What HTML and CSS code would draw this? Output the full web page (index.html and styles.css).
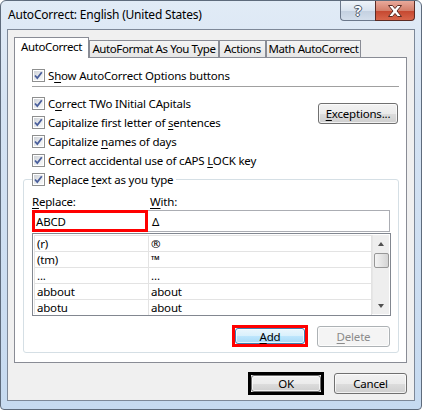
FILE: index.html
```html
<!DOCTYPE html>
<html lang="en">
<head>
    <meta charset="UTF-8">
    <title>AutoCorrect: English (United States)</title>
    <link rel="stylesheet" href="styles.css">
</head>
<body>
    <div class="window">
        <div class="titlebar">
            <span class="title">AutoCorrect: English (United States)</span>
            <div class="caption">
                <span class="cap help">?</span>
                <span class="cap close">
                    <svg width="16" height="14" viewBox="0 0 16 14"><path d="M1.5 1.5h4l2.5 3 2.5-3h4l-4.5 5.5 4.5 5.5h-4l-2.5-3-2.5 3h-4l4.5-5.5z" fill="#fff" stroke="#5a2a22" stroke-width="1" stroke-linejoin="round"/></svg>
                </span>
            </div>
        </div>

        <div class="client">
            <div class="tabs">
                <div class="tab active">AutoCorrect</div>
                <div class="tab t2">AutoFormat As You Type</div>
                <div class="tab t3">Actions</div>
                <div class="tab t4">Math AutoCorrect</div>
            </div>

            <div class="panel">
                <div class="row show">
                    <span class="cb"><svg width="11" height="11" viewBox="0 0 11 11"><path d="M2 5.5l2.3 2.6L8.8 2.2" fill="none" stroke="#4a5f9c" stroke-width="1.8"/></svg></span>
                    <span>S<u>h</u>ow AutoCorrect Options buttons</span>
                </div>
                <div class="sep"></div>

                <div class="opts">
                    <div class="opt-list">
                        <div class="row">
                            <span class="cb"><svg width="11" height="11" viewBox="0 0 11 11"><path d="M2 5.5l2.3 2.6L8.8 2.2" fill="none" stroke="#4a5f9c" stroke-width="1.8"/></svg></span>
                            <span>C<u>o</u>rrect TWo INitial CApitals</span>
                        </div>
                        <div class="row">
                            <span class="cb"><svg width="11" height="11" viewBox="0 0 11 11"><path d="M2 5.5l2.3 2.6L8.8 2.2" fill="none" stroke="#4a5f9c" stroke-width="1.8"/></svg></span>
                            <span>Capitalize first letter of <u>s</u>entences</span>
                        </div>
                        <div class="row">
                            <span class="cb"><svg width="11" height="11" viewBox="0 0 11 11"><path d="M2 5.5l2.3 2.6L8.8 2.2" fill="none" stroke="#4a5f9c" stroke-width="1.8"/></svg></span>
                            <span>Capitalize <u>n</u>ames of days</span>
                        </div>
                        <div class="row">
                            <span class="cb"><svg width="11" height="11" viewBox="0 0 11 11"><path d="M2 5.5l2.3 2.6L8.8 2.2" fill="none" stroke="#4a5f9c" stroke-width="1.8"/></svg></span>
                            <span>Correct accidental use of cAPS <u>L</u>OCK key</span>
                        </div>
                    </div>
                    <button class="btn exc"><u>E</u>xceptions...</button>
                </div>

                <fieldset class="group">
                    <legend>
                        <span class="row">
                            <span class="cb"><svg width="11" height="11" viewBox="0 0 11 11"><path d="M2 5.5l2.3 2.6L8.8 2.2" fill="none" stroke="#4a5f9c" stroke-width="1.8"/></svg></span>
                            <span>Replace <u>t</u>ext as you type</span>
                        </span>
                    </legend>

                    <div class="labels">
                        <span class="lbl-replace"><u>R</u>eplace:</span>
                        <span><u>W</u>ith:</span>
                    </div>
                    <div class="inputs">
                        <div class="field replace">ABCD</div>
                        <div class="field with">Δ</div>
                    </div>

                    <div class="list">
                        <div class="grid">
                            <div class="cell">(r)</div><div class="cell">®</div>
                            <div class="cell">(tm)</div><div class="cell">™</div>
                            <div class="cell">...</div><div class="cell">…</div>
                            <div class="cell">abbout</div><div class="cell">about</div>
                            <div class="cell">abotu</div><div class="cell">about</div>
                        </div>
                        <div class="scroll">
                            <span class="arrow"><span class="tri up"></span></span>
                            <span class="thumb"></span>
                            <span class="arrow bottom"><span class="tri down"></span></span>
                        </div>
                    </div>

                    <div class="actions">
                        <span class="mark red"><button class="btn add"><u>A</u>dd</button></span>
                        <button class="btn del"><u>D</u>elete</button>
                    </div>
                </fieldset>
            </div>

            <div class="footer">
                <span class="mark black"><button class="btn ok">OK</button></span>
                <button class="btn cancel">Cancel</button>
            </div>
        </div>
    </div>
</body>
</html>
```

FILE: styles.css
```css
* {
    margin: 0;
    padding: 0;
    box-sizing: border-box;
}

body {
    width: 422px;
    height: 410px;
    overflow: hidden;
    background: #fff;
    font-family: "Noto Sans", sans-serif;
    font-size: 11.5px;
    letter-spacing: -0.2px;
    color: #000;
}

u {
    text-underline-offset: 2px;
}

/* window frame */
.window {
    width: 422px;
    height: 410px;
    border: 1px solid #5e6b7c;
    border-radius: 6px 6px 4px 4px;
    background: linear-gradient(180deg, #e1ebf6 0%, #d5e3f3 25%, #c6daf0 100%);
    padding: 0 6px 8px;
    display: flex;
    flex-direction: column;
}

.titlebar {
    height: 28px;
    display: flex;
    align-items: flex-start;
    padding-left: 1px;
}

.title {
    line-height: 28px;
    font-size: 12px;
    letter-spacing: -0.2px;
}

.caption {
    margin-left: auto;
    display: flex;
}

.cap {
    height: 20px;
    display: flex;
    align-items: center;
    justify-content: center;
    border: 1px solid #6b788b;
    border-top: none;
}

.help {
    width: 35px;
    border-right: none;
    border-radius: 0 0 0 4px;
    background: linear-gradient(180deg, #eef3f9 0%, #d9e3ef 50%, #c3d0e0 51%, #d3deeb 100%);
    color: #fff;
    font-weight: bold;
    font-size: 14px;
    text-shadow: 1px 0 #4b586a, -1px 0 #4b586a, 0 1px #4b586a, 0 -1px #4b586a;
}

.close {
    width: 40px;
    border-color: #5b2b24;
    border-radius: 0 0 4px 0;
    background: linear-gradient(180deg, #e9a99b 0%, #d47f6b 50%, #c4462f 51%, #d8664b 100%);
}

/* client area */
.client {
    flex: 1;
    background: #f0f0f0;
    border: 1px solid #7d8898;
    padding: 7px 0 0 6px;
}

.tabs {
    display: flex;
    align-items: flex-end;
    height: 20px;
}

.tab {
    height: 17px;
    border: 1px solid #898c95;
    border-bottom: none;
    background: linear-gradient(180deg, #f4f4f4 0%, #e6e6e6 100%);
    text-align: center;
    line-height: 15px;
    white-space: nowrap;
    letter-spacing: -0.4px;
    overflow: hidden;
}

.tab.active {
    width: 75px;
    height: 21px;
    margin-bottom: -1px;
    background: #fff;
    line-height: 18px;
    position: relative;
    z-index: 1;
}

.t2 { width: 130px; }
.t3 { width: 47px; }
.t4 { width: 95px; }

.panel {
    width: 393px;
    height: 306px;
    background: #fff;
    border: 1px solid #898c95;
    padding: 8px 7px 0 8px;
}

.row {
    display: flex;
    align-items: center;
    height: 19px;
    gap: 3px;
    white-space: nowrap;
}

.cb {
    width: 13px;
    height: 13px;
    flex: none;
    display: flex;
    border: 1px solid #8e8f8f;
    background: linear-gradient(135deg, #c8ccd2 0%, #eceef0 60%, #fafafa 100%);
    box-shadow: inset 0 0 0 1px #fff;
}

.show {
    padding-left: 9px;
}

.sep {
    height: 1px;
    background: #a0a0a0;
    margin: 1px 0 7px 9px;
}

.opts {
    display: flex;
    padding-left: 9px;
}

.opt-list {
    flex: 1;
}

/* buttons */
.btn {
    font: inherit;
    letter-spacing: inherit;
    color: #000;
    border: 1px solid #707070;
    border-radius: 3px;
    background: linear-gradient(180deg, #f2f2f2 0%, #ebebeb 50%, #dddddd 51%, #cfcfcf 100%);
    box-shadow: inset 0 0 0 1px rgba(255, 255, 255, 0.7);
    display: flex;
    align-items: center;
    justify-content: center;
}

.exc {
    width: 80px;
    height: 21px;
    margin: 9px 1px 0 0;
}

.mark {
    display: flex;
    border: 3px solid #f00;
}

.mark.black {
    border-color: #000;
}

.add {
    width: 70px;
    height: 16px;
    border-color: #3c7fb1;
    background: linear-gradient(180deg, #eaf6fd 0%, #d9f0fc 50%, #bee6fd 51%, #a7d9f5 100%);
}

.del {
    width: 73px;
    height: 21px;
    color: #8b8b8b;
    border-color: #adb2b5;
    background: #f4f4f4;
}

/* replace group */
.group {
    width: 376px;
    min-width: 0;
    border: 1px solid #d5dfe5;
    border-radius: 3px;
    padding: 0 7px 5px 8px;
}

.group legend {
    padding-right: 3px;
}

.labels {
    display: flex;
    padding-top: 4px;
    line-height: 17px;
}

.lbl-replace {
    width: 118px;
}

.inputs {
    display: flex;
    height: 22px;
}

.field {
    height: 22px;
    display: flex;
    align-items: center;
}

.replace {
    width: 116px;
    border: 3px solid #f00;
    padding-left: 1px;
}

.with {
    width: 242px;
    border: 1px solid #abadb3;
    border-left: none;
    padding-left: 4px;
}

.list {
    margin-top: 1px;
    height: 83px;
    border: 1px solid #828790;
    padding: 1px;
    display: flex;
    overflow: hidden;
}

.grid {
    flex: 1;
    display: grid;
    grid-template-columns: 114px 1fr;
    grid-auto-rows: 16px;
    border-left: 1px solid #e3e3e3;
    border-top: 1px solid #e3e3e3;
}

.cell {
    border-right: 1px solid #e3e3e3;
    border-bottom: 1px solid #e3e3e3;
    padding-left: 2px;
    line-height: 15px;
    white-space: nowrap;
}

.scroll {
    width: 17px;
    display: flex;
    flex-direction: column;
    align-items: center;
    background: #eeeeee;
    border-left: 1px solid #e6e6e6;
}

.arrow {
    width: 17px;
    height: 17px;
    display: flex;
    align-items: center;
    justify-content: center;
}

.arrow.bottom {
    margin-top: auto;
}

.tri {
    width: 0;
    height: 0;
    border-left: 3.5px solid transparent;
    border-right: 3.5px solid transparent;
}

.tri.up {
    border-bottom: 4px solid #505050;
}

.tri.down {
    border-top: 4px solid #505050;
}

.thumb {
    width: 15px;
    height: 15px;
    margin-top: 1px;
    border: 1px solid #979797;
    border-radius: 2px;
    background: linear-gradient(90deg, #f4f4f4 0%, #e4e4e4 50%, #d4d4d4 100%);
}

.actions {
    display: flex;
    justify-content: flex-end;
    align-items: center;
    gap: 9px;
    margin-top: 9px;
    padding-right: 1px;
}

/* dialog buttons */
.footer {
    width: 393px;
    display: flex;
    justify-content: flex-end;
    align-items: center;
    gap: 10px;
    margin-top: 9px;
}

.ok {
    width: 70px;
    height: 17px;
}

.cancel {
    width: 73px;
    height: 21px;
}
```
